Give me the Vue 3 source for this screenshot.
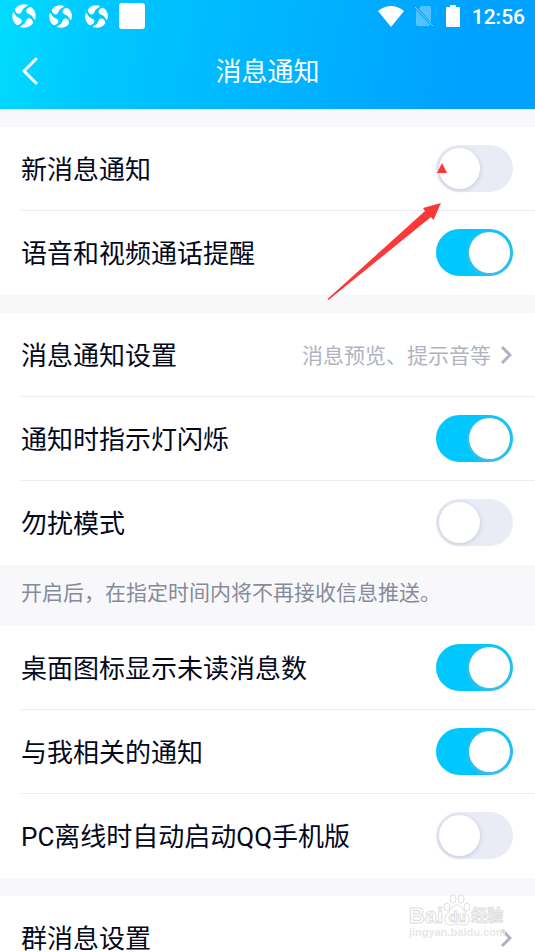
<script setup>
import { reactive } from 'vue'

const groups = reactive([
  {
    rows: [
      { id: 'new', label: '新消息通知', on: false },
      { id: 'call', label: '语音和视频通话提醒', on: true },
    ],
  },
  {
    rows: [
      { id: 'settings', label: '消息通知设置', link: true, detail: '消息预览、提示音等' },
      { id: 'led', label: '通知时指示灯闪烁', on: true },
      { id: 'dnd', label: '勿扰模式', on: false },
    ],
    note: '开启后，在指定时间内将不再接收信息推送。',
  },
  {
    rows: [
      { id: 'badge', label: '桌面图标显示未读消息数', on: true },
      { id: 'related', label: '与我相关的通知', on: true },
      { id: 'pc', label: 'PC离线时自动启动QQ手机版', on: false },
    ],
  },
  {
    rows: [{ id: 'group', label: '群消息设置', link: true }],
  },
])
</script>

<template>
  <div class="page">
    <header class="header">
      <div class="status">
        <div class="status-left">
          <svg v-for="n in 3" :key="n" class="swirl" :class="{ small: n > 1 }" viewBox="0 0 24 24" aria-hidden="true">
            <g v-for="a in [0, 90, 180, 270]" :key="a" :transform="`rotate(${a} 12 12)`">
              <path d="M16 1 A11.7 11.7 0 0 0 2.900 4.700 C2.800 8 5.500 10.500 8 9.600 C10 8.800 9.800 6.500 11.300 4.800 C12.700 3.200 14.500 2.800 16 1Z" />
            </g>
          </svg>
          <span class="square"></span>
        </div>
        <div class="status-right">
          <svg class="wifi" viewBox="0 0 26 21" aria-hidden="true"><path d="M0 5 Q13 -5 26 5 L13 21Z" /></svg>
          <svg class="sim" viewBox="0 0 20 22" aria-hidden="true">
            <path d="M7 1 H15 Q17 1 17 3 V17 L5 4Z M2 5 L16 20 Q16 21 15 21 H4 Q2 21 2 19Z" opacity=".32" />
            <path d="M1 2 L19 21" class="slash" />
          </svg>
          <svg class="battery" viewBox="0 0 14 22" aria-hidden="true"><path d="M4 0H10V2H13Q14 2 14 3V21Q14 22 13 22H1Q0 22 0 21V3Q0 2 1 2H4Z" /></svg>
          <time class="clock">12:56</time>
        </div>
      </div>
      <div class="bar">
        <button class="back" type="button" aria-label="返回">
          <svg viewBox="0 0 16 28" aria-hidden="true"><path d="M14 2 L2 14 L14 26" /></svg>
        </button>
        <h1 class="title">消息通知</h1>
      </div>
    </header>

    <main class="content">
      <section v-for="(group, i) in groups" :key="i" class="group" :class="{ noted: group.note }">
        <div class="card">
          <template v-for="row in group.rows" :key="row.id">
            <a v-if="row.link" class="row" href="#">
              <span class="label">{{ row.label }}</span>
              <span class="detail">{{ row.detail }}</span>
              <svg class="chevron" viewBox="0 0 12 18" aria-hidden="true"><path d="M2 1 L10 9 L2 17" /></svg>
            </a>
            <div v-else class="row">
              <label class="label" :for="row.id">{{ row.label }}</label>
              <input :id="row.id" v-model="row.on" class="switch" type="checkbox" role="switch" />
            </div>
          </template>
        </div>
        <p v-if="group.note" class="note">{{ group.note }}</p>
      </section>
    </main>

    <svg class="pointer" viewBox="0 0 125 140" aria-hidden="true">
      <path d="M.5 139 L98 51 L96 48 L114 43 L106.500 60 L104 57 L1.500 140Z" />
      <path d="M110 13 L115 3 L120 13Z" />
    </svg>

    <div class="watermark">
      <div class="brand">
        <span class="latin">Bai</span>
        <span class="paw">
          <svg viewBox="0 0 28 32" aria-hidden="true">
            <path d="M14 11 C10 11 8 16 5 19 C-1 24 2 31 7 31 C10 31 12 30 14 30 C17 30 18 31 21 31 C26 31 29 24 23 19 C20 16 18 11 14 11Z" />
            <ellipse cx="4" cy="13" rx="3" ry="4" />
            <ellipse cx="10" cy="5" rx="3" ry="4" />
            <ellipse cx="18" cy="5" rx="3" ry="4" />
            <ellipse cx="24" cy="13" rx="3" ry="4" />
          </svg>
          <span class="du">du</span>
        </span>
        <span class="cn">经验</span>
      </div>
      <div class="site">jingyan.baidu.com</div>
    </div>
  </div>
</template>

<style>
body {
  background: #f8f8fb;
}
</style>

<style scoped>
.page {
  position: relative;
  height: 100vh;
  overflow: hidden;
  background: #f8f8fb;
  color: #03081a;
  font-family: Roboto, "Noto Sans CJK SC", sans-serif;
}
.header {
  color: #fff;
  background: linear-gradient(100deg, #00dcff 0%, #00c6ff 20%, #00a2ff 85%);
}
.status {
  display: flex;
  justify-content: space-between;
  height: 32px;
  padding: 0 10px 0 12px;
}
.status-left,
.status-right {
  display: flex;
  align-items: center;
}
.status-left {
  gap: 13px;
}
.swirl {
  width: 24px;
  height: 24px;
  fill: #fff;
}
.swirl.small {
  width: 23px;
  height: 23px;
}
.square {
  width: 26px;
  height: 26px;
  border-radius: 3px;
  background: #fff;
}
.status-left .square {
  margin-left: -2px;
}
.wifi {
  width: 26px;
  height: 21px;
  margin-right: 10px;
  fill: #fff;
}
.sim {
  width: 20px;
  height: 22px;
  margin-right: 12px;
  fill: #fff;
}
.slash {
  stroke: #7fccff;
  stroke-width: 1;
}
.battery {
  width: 14px;
  height: 22px;
  margin-right: 12px;
  fill: #fff;
}
.clock {
  padding-top: 2px;
  font-size: 21px;
  font-weight: 500;
}
.bar {
  display: grid;
  grid-template-columns: 60px 1fr 60px;
  align-items: center;
  height: 77px;
}
.back {
  display: flex;
  padding: 0 0 0 22px;
  border: 0;
  background: none;
}
.back svg {
  width: 16px;
  height: 28px;
  fill: none;
  stroke: #fff;
  stroke-width: 3;
  stroke-linecap: round;
  stroke-linejoin: round;
}
.title {
  margin: 0;
  padding-top: 2px;
  font-size: 26px;
  font-weight: 400;
  line-height: 38px;
  text-align: center;
}
.group {
  padding-top: 18px;
}
.group.noted + .group {
  padding-top: 0;
}
.card {
  background: #fff;
}
.row {
  position: relative;
  display: flex;
  align-items: center;
  height: 84px;
  padding: 0 22px 1px 21px;
  box-sizing: border-box;
  color: inherit;
  text-decoration: none;
}
.row:not(:last-child)::after {
  content: "";
  position: absolute;
  right: 0;
  bottom: 0;
  left: 21px;
  height: 1px;
  background: #e9ebf5;
}
.label {
  flex: 1;
  padding-top: 3px;
  font-size: 26px;
  line-height: 38px;
}
.detail {
  margin-right: 9px;
  padding-top: 3px;
  color: #b0b3bf;
  font-size: 21px;
  line-height: 30px;
}
.chevron {
  width: 12px;
  height: 18px;
  margin-right: 1px;
  fill: none;
  stroke: #afb1c1;
  stroke-width: 3;
}
.switch {
  appearance: none;
  display: flex;
  width: 77px;
  height: 47px;
  margin: 0;
  padding: 3px;
  box-sizing: border-box;
  border-radius: 24px;
  background: #e9ebf5;
}
.switch::before {
  content: "";
  width: 41px;
  height: 41px;
  border-radius: 50%;
  background: #fff;
  box-shadow: 0 1px 4px rgba(100, 110, 150, 0.3);
}
.switch:checked {
  justify-content: flex-end;
  background: #00c8ff;
}
.switch:checked::before {
  box-shadow: 0 1px 4px rgba(160, 170, 200, 0.8);
}
.note {
  margin: 0;
  padding: 12px 21px 17px;
  color: #878b99;
  font-size: 21px;
  line-height: 32px;
}
.pointer {
  position: absolute;
  top: 160px;
  right: 83px;
  width: 125px;
  height: 140px;
  fill: #fb3837;
  pointer-events: none;
}
.watermark {
  position: absolute;
  right: 24px;
  bottom: 13px;
  width: 102px;
  color: #fff;
  font-family: "Liberation Sans", "Noto Sans CJK SC", sans-serif;
  -webkit-text-stroke: 1px #dedede;
  pointer-events: none;
}
.brand {
  display: flex;
  align-items: flex-end;
  font-size: 22px;
  font-weight: 700;
}
.latin {
  line-height: 20px;
}
.paw {
  position: relative;
  width: 28px;
  height: 32px;
}
.paw svg {
  display: block;
  width: 28px;
  height: 32px;
  fill: #fff;
  stroke: #dedede;
  stroke-width: 1;
}
.du {
  position: absolute;
  right: 0;
  bottom: 0;
  left: 0;
  font-size: 14px;
  line-height: 18px;
  text-align: center;
}
.cn {
  font-size: 16px;
  line-height: 20px;
}
.site {
  font-size: 11px;
  font-weight: 700;
  line-height: 13px;
  -webkit-text-stroke: 0;
  color: #e8e8e8;
}
</style>
